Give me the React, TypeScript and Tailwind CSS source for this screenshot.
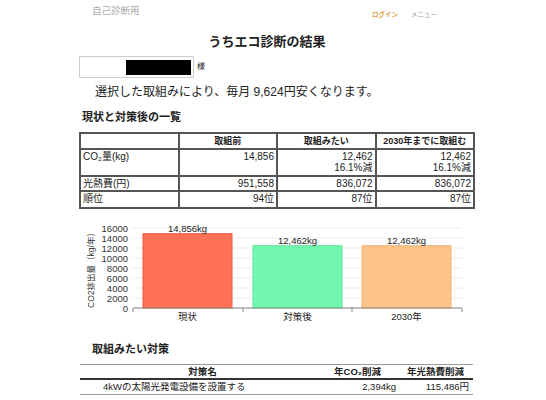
import React from "react";

const font = { fontFamily: '"Liberation Sans", "Noto Sans CJK JP", sans-serif' };

const rows = [
  { label: "CO₂量(kg)", vals: [["14,856"], ["12,462", "16.1%減"], ["12,462", "16.1%減"]], h: "h-[27px]" },
  { label: "光熱費(円)", vals: [["951,558"], ["836,072"], ["836,072"]], h: "h-[15px]" },
  { label: "順位", vals: [["94位"], ["87位"], ["87位"]], h: "h-[17px]" },
];

const bars = [
  { x: 143, v: 14856, label: "14,856kg", cat: "現状", fill: "#ff7057", stroke: "#ee5a40" },
  { x: 253, v: 12462, label: "12,462kg", cat: "対策後", fill: "#72f7ae", stroke: "#5fe69a" },
  { x: 362, v: 12462, label: "12,462kg", cat: "2030年", fill: "#fdc48a", stroke: "#f0b274" },
];

function Chart() {
  const zero = 89;
  const k = 80 / 16000;
  return (
    <svg width="546" height="105" className="block">
      {Array.from({ length: 9 }).map((_, i) => (
        <g key={i}>
          <line x1={133} x2={462} y1={zero - i * 10} y2={zero - i * 10} stroke="#ececec" strokeWidth="1" />
          <text x={128} y={zero - i * 10 + 3.5} fontSize="9.5" textAnchor="end" fill="#333">
            {i * 2000}
          </text>
        </g>
      ))}
      <text
        transform="translate(94 49) rotate(-90)"
        fontSize="8.5"
        textAnchor="middle"
        fill="#333"
      >
        CO2排出量（kg/年）
      </text>
      {bars.map((b) => {
        const top = zero - b.v * k;
        return (
          <g key={b.cat}>
            <rect x={b.x} y={top} width={89} height={zero - top} fill={b.fill} stroke={b.stroke} strokeWidth="1" />
            <text x={b.x + 44.5} y={top - 2} fontSize="9.5" textAnchor="middle" fill="#222">
              {b.label}
            </text>
            <text x={b.x + 44.5} y={101} fontSize="9.5" textAnchor="middle" fill="#222">
              {b.cat}
            </text>
          </g>
        );
      })}
      <line x1={133} x2={462} y1={zero} y2={zero} stroke="#888" strokeWidth="1" />
      {[133, 243, 352, 462].map((x) => (
        <line key={x} x1={x} x2={x} y1={zero} y2={zero + 4} stroke="#888" strokeWidth="1" />
      ))}
    </svg>
  );
}

export default function App() {
  return (
    <div className="w-[546px] h-[400px] bg-white text-[#222] overflow-hidden" style={font}>
      <header className="flex h-[25px]">
        <div className="pl-[92px] pt-[4px] text-[9.5px] text-[#aaa]">自己診断用</div>
        <div className="ml-auto flex gap-[13px] pr-[109px] pt-[10px] text-[6.5px]">
          <span className="font-bold text-[#e0a040]">ログイン</span>
          <span className="text-[#999]">メニュー</span>
        </div>
      </header>

      <h1 className="mt-[9px] pr-[12px] text-center text-[13px] font-bold leading-[16px]">うちエコ診断の結果</h1>

      <div className="mt-[6px] flex items-center pl-[79px]">
        <div className="flex h-[22px] w-[115px] items-center justify-end border border-[#ccc] pr-[2px]">
          <div className="h-[15px] w-[65px] bg-black" />
        </div>
        <span className="ml-[3px] text-[8px]">様</span>
      </div>

      <p className="mt-[6px] pl-[95px] text-[12px] leading-[16px]">選択した取組みにより、毎月 9,624円安くなります。</p>

      <h2 className="mt-[10px] pl-[82px] text-[11px] font-bold leading-[14px]">現状と対策後の一覧</h2>

      <div className="mt-[8px] pl-[79px]">
        <table className="w-[396px] table-fixed border-collapse text-[10px] leading-[11px]">
          <thead>
            <tr className="h-[16px]">
              {["", "取組前", "取組みたい", "2030年までに取組む"].map((t, i) => (
                <th key={i} className="border-2 border-[#555] px-[2px] text-center text-[9px] font-bold">
                  {t}
                </th>
              ))}
            </tr>
          </thead>
          <tbody>
            {rows.map((r) => (
              <tr key={r.label} className={r.h}>
                <td className="border-2 border-[#555] px-[2px] align-top pt-[1px]">{r.label}</td>
                {r.vals.map((v, i) => (
                  <td key={i} className="border-2 border-[#555] px-[2px] pt-[1px] text-right align-top">
                    {v.map((line) => (
                      <div key={line}>{line}</div>
                    ))}
                  </td>
                ))}
              </tr>
            ))}
          </tbody>
        </table>
      </div>

      <div className="mt-[10px]">
        <Chart />
      </div>

      <h2 className="mt-[18px] pl-[92px] text-[11px] font-bold leading-[14px]">取組みたい対策</h2>

      <div className="ml-[80px] mt-[8px] w-[393px] border-t border-[#999] text-[9.5px]">
        <div className="grid h-[15px] grid-cols-[245px_72px_76px] items-center border-b-2 border-[#333] font-bold">
          <span className="text-center">対策名</span>
          <span className="text-right pr-[16px]">年CO₂削減</span>
          <span className="text-right pr-[9px]">年光熱費削減</span>
        </div>
        <div className="grid h-[15px] grid-cols-[245px_72px_76px] items-center border-b border-[#999]">
          <span className="pl-[23px]">4kWの太陽光発電設備を設置する</span>
          <span className="text-right pr-[1px]">2,394kg</span>
          <span className="text-right pr-[4px]">115,486円</span>
        </div>
      </div>
    </div>
  );
}
